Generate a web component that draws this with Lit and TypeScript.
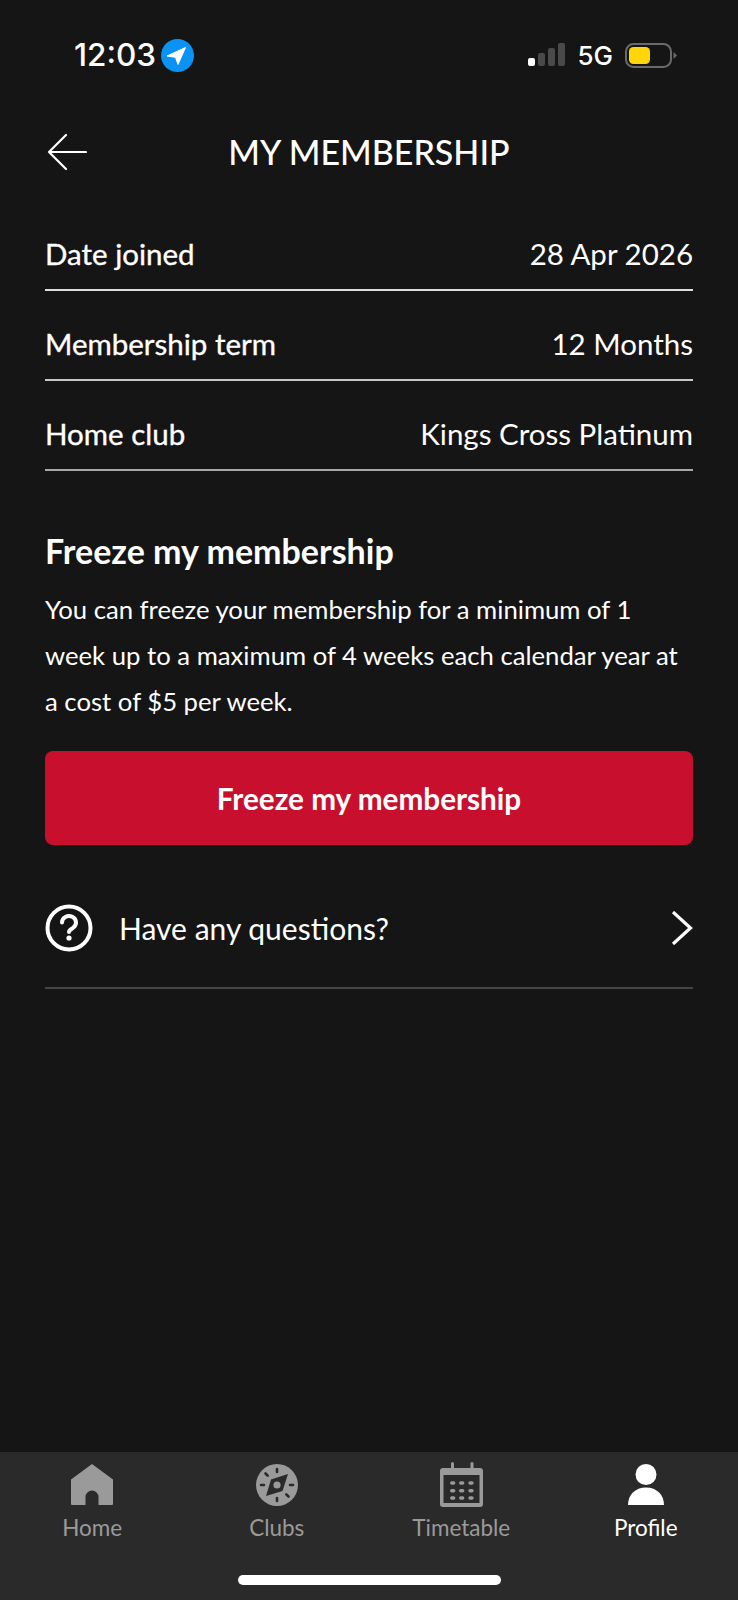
import { LitElement, html, css, svg } from 'lit'
import { customElement } from 'lit/decorators.js'

const icons = {
    home: svg`<path d="M21 0 L42 15.5 V40 a1 1 0 0 1 -1 1 H27.5 V33 a6.5 6.5 0 0 0 -13 0 V41 H1 a1 1 0 0 1 -1 -1 V15.5 Z" fill="currentColor"/>`,
    clubs: svg`<circle cx="21" cy="21" r="21" fill="currentColor"/>
        <path d="M32 10 L26.5 27 L10 32 L15 15.5 Z" fill="#2a2a2a"/>
        <circle cx="21" cy="21" r="3.6" fill="currentColor"/>
        <g stroke="#2a2a2a" stroke-width="2.6" stroke-linecap="round">
            <path d="M21 5 v3 M21 34 V37 M5 21 h3 M34 21 H37 M9.5 9.5 l2.2 2.2 M30.3 30.3 l2.2 2.2"/>
        </g>`,
    timetable: svg`<rect x="0" y="6" width="43" height="39" rx="3" fill="currentColor"/>
        <rect x="11" y="0" width="3" height="10" rx="1.5" fill="currentColor"/>
        <rect x="30.5" y="0" width="3" height="10" rx="1.5" fill="currentColor"/>
        <rect x="3.5" y="13" width="36" height="28" fill="#2a2a2a"/>
        <g fill="currentColor">
            ${[21, 28.7, 36].map(y => [12.7, 21.7, 31].map(x => svg`<rect x=${x - 2.7} y=${y - 1.8} width="5.4" height="3.6" rx="1.8"/>`))}
        </g>`,
    profile: svg`<circle cx="18" cy="10.5" r="10.5" fill="currentColor"/>
        <path d="M0 41 C0 31 7 23.5 18 23.5 C29 23.5 36 31 36 41 Z" fill="currentColor"/>`,
}

@customElement('app-root')
export class AppRoot extends LitElement {
    static styles = css`
        :host {
            display: block;
            height: 1600px;
            background: #151515;
            color: #fff;
            font-family: 'Lato', sans-serif;
        }

        .screen {
            height: 1600px;
            display: flex;
            flex-direction: column;
            box-sizing: border-box;
        }

        .status {
            height: 112px;
            flex: none;
            display: flex;
            justify-content: space-between;
            align-items: flex-start;
            padding: 38px 61px 0 74px;
            box-sizing: border-box;
        }

        .status-left,
        .status-right {
            display: flex;
            align-items: center;
            height: 34px;
        }

        .time {
            font-family: 'Inter', sans-serif;
            font-size: 31.5px;
            font-weight: 500;
            line-height: 34px;
        }

        .loc {
            margin-left: 5px;
        }

        .five-g {
            font-family: 'Inter', sans-serif;
            font-size: 26px;
            font-weight: 500;
            margin: 0 12px 0 12px;
        }

        .header {
            flex: none;
            height: 80px;
            position: relative;
            display: flex;
            align-items: center;
            justify-content: center;
        }

        .header h1 {
            margin: 0;
            font-size: 34px;
            font-weight: 500;
            line-height: 40px;
        }

        .back {
            position: absolute;
            left: 47px;
            top: 21px;
        }

        .content {
            flex: 1;
            padding: 9px 45px 0 45px;
        }

        .row {
            display: flex;
            justify-content: space-between;
            align-items: center;
            height: 90px;
            box-sizing: border-box;
            padding-top: 17px;
            border-bottom: 2px solid #dedede;
            font-size: 29.5px;
        }

        .row:nth-child(2) {
            border-bottom-color: #c8c8c8;
        }

        .row:nth-child(3) {
            border-bottom-color: #a8a8a8;
        }

        .row .label {
            -webkit-text-stroke: 0.35px #fff;
        }

        h2 {
            margin: 60px 0 0;
            font-size: 34px;
            font-weight: 700;
            line-height: 40px;
        }

        p {
            margin: 15px 0 0;
            font-size: 25.7px;
            line-height: 46px;
        }

        .freeze {
            display: flex;
            align-items: center;
            justify-content: center;
            margin-top: 27px;
            height: 94px;
            background: #c8102e;
            border-radius: 8px;
            font-size: 29.7px;
            font-weight: 700;
        }

        .faq {
            display: flex;
            align-items: center;
            height: 144px;
            box-sizing: border-box;
            padding-top: 24px;
            border-bottom: 2px solid #444;
            font-size: 30px;
        }

        .faq span {
            flex: 1;
            margin-left: 26px;
        }

        .tabs {
            flex: none;
            height: 148px;
            box-sizing: border-box;
            background: #2a2a2a;
            position: relative;
            display: grid;
            grid-template-columns: repeat(4, 1fr);
        }

        .tab {
            display: flex;
            flex-direction: column;
            align-items: center;
            color: #9a9a9a;
            font-size: 22.5px;
            line-height: 30px;
        }

        .tab.active {
            color: #fff;
        }

        .tab .icon {
            height: 41px;
            margin-top: 12px;
            display: flex;
            align-items: center;
        }

        .tab .label {
            margin-top: 8px;
        }

        .indicator {
            position: absolute;
            left: 238px;
            top: 123px;
            width: 263px;
            height: 10px;
            border-radius: 5px;
            background: #fff;
        }
    `

    renderTab(label: string, icon: keyof typeof icons, w: number, h: number, active = false) {
        return html`
            <div class="tab ${active ? 'active' : ''}">
                <div class="icon">
                    <svg width=${w} height=${h} viewBox="0 0 ${w} ${h}">${icons[icon]}</svg>
                </div>
                <div class="label">${label}</div>
            </div>
        `
    }

    render() {
        return html`
            <div class="screen">
                <div class="status">
                    <div class="status-left">
                        <span class="time">12:03</span>
                        <svg class="loc" width="33" height="33" viewBox="0 0 33 33">
                            <circle cx="16.5" cy="16.5" r="16.5" fill="#0a93f5" />
                            <path d="M24.5 8.5 L17 25.5 L14.5 18.3 L6 17 Z" fill="#fff" stroke="#fff" stroke-width="1" stroke-linejoin="round" />
                        </svg>
                    </div>
                    <div class="status-right">
                        <svg width="37" height="24" viewBox="0 0 37 24">
                            <rect x="0" y="15" width="7" height="8" rx="2" fill="#fff" />
                            <rect x="10" y="10" width="7" height="13" rx="2" fill="#4a4a4a" />
                            <rect x="20" y="5" width="7" height="18" rx="2" fill="#4a4a4a" />
                            <rect x="30" y="0" width="7" height="23" rx="2" fill="#4a4a4a" />
                        </svg>
                        <span class="five-g">5G</span>
                        <svg width="52" height="25" viewBox="0 0 52 25">
                            <rect x="1" y="1" width="45" height="23" rx="7.5" fill="none" stroke="#6a6a6a" stroke-width="2" />
                            <rect x="4" y="4" width="21" height="17" rx="4.5" fill="#ffd60a" />
                            <path d="M48.5 9 L52 12.5 L48.5 16 Z" fill="#6a6a6a" />
                        </svg>
                    </div>
                </div>

                <div class="header">
                    <svg class="back" width="40" height="38" viewBox="0 0 40 38" fill="none" stroke="#fff" stroke-width="2.2" stroke-linecap="round" stroke-linejoin="round">
                        <path d="M39 19 H2 M19 2 L2 19 L19 36" />
                    </svg>
                    <h1>MY MEMBERSHIP</h1>
                </div>

                <div class="content">
                    <div class="row"><span class="label">Date joined</span><span class="value">28 Apr 2026</span></div>
                    <div class="row"><span class="label">Membership term</span><span class="value">12 Months</span></div>
                    <div class="row"><span class="label">Home club</span><span class="value">Kings Cross Platinum</span></div>

                    <h2>Freeze my membership</h2>
                    <p>You can freeze your membership for a minimum of 1<br />week up to a maximum of 4 weeks each calendar year at<br />a cost of $5 per week.</p>
                    <div class="freeze">Freeze my membership</div>

                    <div class="faq">
                        <svg width="48" height="48" viewBox="0 0 48 48" fill="none" stroke="#fff" stroke-width="4">
                            <circle cx="24" cy="24" r="21.5" />
                            <path d="M17 18.5 a7 6.5 0 1 1 11 5.4 c-2.4 1.5 -4 2.2 -4 4.1" stroke-linecap="round" />
                            <circle cx="24" cy="34" r="2.6" fill="#fff" stroke="none" />
                        </svg>
                        <span>Have any questions?</span>
                        <svg width="22" height="34" viewBox="0 0 22 34" fill="none" stroke="#fff" stroke-width="3.2">
                            <path d="M2 1 L19.5 17 L2 33" />
                        </svg>
                    </div>
                </div>

                <div class="tabs">
                    ${this.renderTab('Home', 'home', 42, 41)}
                    ${this.renderTab('Clubs', 'clubs', 42, 42)}
                    ${this.renderTab('Timetable', 'timetable', 43, 45)}
                    ${this.renderTab('Profile', 'profile', 36, 41, true)}
                    <div class="indicator"></div>
                </div>
            </div>
        `
    }
}
